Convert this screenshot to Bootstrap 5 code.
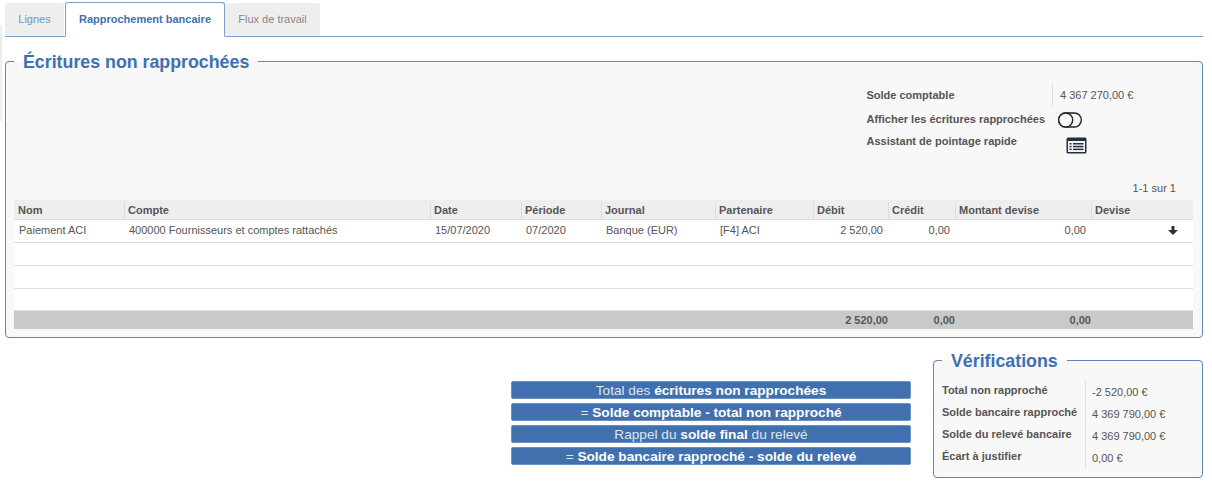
<!DOCTYPE html>
<html lang="fr">
<head>
<meta charset="utf-8">
<title>Rapprochement bancaire</title>
<link rel="stylesheet" href="https://cdn.jsdelivr.net/npm/bootstrap@5.3.0/dist/css/bootstrap.min.css">
<style>
html,body{height:485px;overflow:hidden}
body{font-family:"Liberation Sans",Arial,sans-serif;font-size:11px;color:#555;background:#fff;line-height:1.2;position:relative}
body::before{content:"";position:absolute;left:0;top:25px;width:2px;height:96px;background:#eee}
.shell{padding:2px 9px 0 5px}
.tabs-line{border-bottom:1px solid #7f9fc9;height:35px}
.tabs-line .nav-link{font-size:11px;height:33px;line-height:33px;padding:0;margin-top:1px;border:0;border-radius:3px 3px 0 0;background:#efeeee;color:#7394c0}
.tabs-line .nav-link.tab-a{width:59px;margin-right:1px;text-align:center}
.tabs-line .nav-link.tab-c{width:95px;text-align:center;color:#8a8583}
.tabs-line .nav-link.active{width:160px;height:35px;line-height:33px;margin:0;text-align:center;font-weight:700;color:#4170ae;background:#fff;border:1px solid #7f9fc9;border-bottom-color:#fff;position:relative;z-index:1}
.set-box{border:1px solid #5f87bb;border-radius:4px;background:#f8f8f8;margin:0;min-width:0}
.set-box legend{float:none;width:auto;margin:0;color:#4170ae;font-weight:700}
.main-set{margin-top:14px;padding:0 8px 6px;height:287px}
.main-set legend{font-size:17.8px;padding:0 9px;height:20px;line-height:22px}
.info-zone{margin-left:852.5px;height:111px;padding-top:12px}
.info-row{display:flex;font-weight:700;align-items:flex-start}
.lab-a{width:185.5px;padding-top:6px;font-size:11px}
.val-a{border-left:1px solid #e2e2e2;height:24px;padding:6px 0 0 7px;font-weight:400;font-size:11px}
.r2{height:25px;padding-top:3px}
.r2 .lab-a,.r3 .lab-a{padding-top:3px}
.toggle-i{margin:2px 0 0 6px}
.sheet-i{margin:5px 0 0 14px}
.pager{text-align:right;padding-right:18px;height:13px;font-size:11px}
.grid-t{width:1179px;table-layout:fixed;border-collapse:collapse;margin:5px 0 0;background:#fff;font-size:11px}
.grid-t th{background:#eee;font-weight:700;height:19px;padding:2px 0 0 4px;border-bottom:1px solid #dcdcdc;position:relative}
.grid-t th+th::before{content:"";position:absolute;left:0;top:2px;bottom:0;width:1px;background:#ddd}
.grid-t td{height:23px;padding:0 0 0 5px;border-bottom:1px solid #dedede;white-space:nowrap}
.grid-t tbody tr:last-child td{height:22px}
.grid-t tfoot td{background:#c8c9ca;height:19px;font-weight:700;border-bottom:0;padding:1px 0 0}
.num-c{text-align:right}
.grid-t td.num-c{padding:0 5px 0 0}
.grid-t tfoot td.num-c{padding:1px 0 0}
.c1{width:110px}.c2{width:306px}.c3{width:91px}.c4{width:80px}.c5{width:114px}.c6{width:98px}.c7{width:75px}.c8{width:67px}.c9{width:136px}.c10{width:102px}
.arrow-i{display:block;margin-left:72px;width:10px;height:9px}
.lower{margin-top:22px;height:130px}
.pills{width:400px;margin-left:506px;margin-top:21px;gap:4px}
.pill{height:18px;line-height:17px;background:#4170ae;color:#fff;border-radius:2px;text-align:center;padding:0;border:1px solid #6c91c1;font-size:13.65px}
.pill span{color:#dfe6f0}
.check-set{width:270px;margin-left:22px;margin-top:-9px;height:127px;padding:0 0 0 8px}
.check-set legend{font-size:17.8px;padding:0 9px;height:18px;line-height:20px}
.check-row{display:flex;font-weight:700;height:22px}
.check-row div:first-child{width:143px;padding-top:3px}
.check-row div:last-child{border-left:1px solid #e2e2e2;padding:5px 0 0 6px;font-weight:400}
.check-body{padding-top:12px}
</style>
</head>
<body>
<div class="shell">
  <ul class="nav tabs-line">
    <li class="nav-item"><a class="nav-link tab-a" href="#">Lignes</a></li>
    <li class="nav-item"><a class="nav-link active" href="#">Rapprochement bancaire</a></li>
    <li class="nav-item"><a class="nav-link tab-c" href="#">Flux de travail</a></li>
  </ul>

  <fieldset class="set-box main-set">
    <legend>Écritures non rapprochées</legend>
    <div class="info-zone">
      <div class="info-row"><div class="lab-a">Solde comptable</div><div class="val-a">4 367 270,00 €</div></div>
      <div class="info-row r2"><div class="lab-a">Afficher les écritures rapprochées</div>
        <svg class="toggle-i" width="24" height="16" viewBox="0 0 24 16" fill="none" stroke="#222" stroke-width="1.4"><rect x=".7" y="1" width="22.600" height="14" rx="7"/><circle cx="7.700" cy="8" r="7" fill="#f8f8f8"/></svg></div>
      <div class="info-row r3"><div class="lab-a">Assistant de pointage rapide</div>
        <svg class="sheet-i" width="21" height="17" viewBox="0 0 21 17"><rect x=".5" y=".5" width="20" height="16" rx="1.5" fill="#23303f"/><rect x="2" y="4" width="17" height="11" fill="#f2f4f6"/><g fill="#23303f"><rect x="3.500" y="6" width="2" height="1.500"/><rect x="3.500" y="8.800" width="2" height="1.500"/><rect x="3.500" y="11.600" width="2" height="1.500"/><rect x="7" y="6" width="10.500" height="1.500"/><rect x="7" y="8.800" width="10.500" height="1.500"/><rect x="7" y="11.600" width="10.500" height="1.500"/></g></svg></div>
    </div>
    <div class="pager">1-1 sur 1</div>
    <table class="grid-t">
      <colgroup><col class="c1"><col class="c2"><col class="c3"><col class="c4"><col class="c5"><col class="c6"><col class="c7"><col class="c8"><col class="c9"><col class="c10"></colgroup>
      <thead><tr><th>Nom</th><th>Compte</th><th>Date</th><th>Période</th><th>Journal</th><th>Partenaire</th><th>Débit</th><th>Crédit</th><th>Montant devise</th><th>Devise</th></tr></thead>
      <tbody>
        <tr><td>Paiement ACI</td><td>400000 Fournisseurs et comptes rattachés</td><td>15/07/2020</td><td>07/2020</td><td>Banque (EUR)</td><td>[F4] ACI</td><td class="num-c">2 520,00</td><td class="num-c">0,00</td><td class="num-c">0,00</td><td><svg class="arrow-i" viewBox="0 0 10 9"><path d="M3.500 0h3v4H10L5 9 0 4h3.500z" fill="#333"/></svg></td></tr>
        <tr><td colspan="10"></td></tr>
        <tr><td colspan="10"></td></tr>
        <tr><td colspan="10"></td></tr>
      </tbody>
      <tfoot><tr><td></td><td></td><td></td><td></td><td></td><td></td><td class="num-c">2 520,00</td><td class="num-c">0,00</td><td class="num-c">0,00</td><td></td></tr></tfoot>
    </table>
  </fieldset>

  <div class="lower d-flex">
    <div class="pills d-flex flex-column">
      <div class="pill"><span>Total des </span><b>écritures non rapprochées</b></div>
      <div class="pill"><span>= </span><b>Solde comptable - total non rapproché</b></div>
      <div class="pill"><span>Rappel du </span><b>solde final</b><span> du relevé</span></div>
      <div class="pill"><span>= </span><b>Solde bancaire rapproché - solde du relevé</b></div>
    </div>
    <fieldset class="set-box check-set">
      <legend>Vérifications</legend>
      <div class="check-body">
        <div class="check-row"><div>Total non rapproché</div><div>-2 520,00 €</div></div>
        <div class="check-row"><div>Solde bancaire rapproché</div><div>4 369 790,00 €</div></div>
        <div class="check-row"><div>Solde du relevé bancaire</div><div>4 369 790,00 €</div></div>
        <div class="check-row"><div>Écart à justifier</div><div>0,00 €</div></div>
      </div>
    </fieldset>
  </div>
</div>
<script src="https://cdn.jsdelivr.net/npm/bootstrap@5.3.0/dist/js/bootstrap.bundle.min.js"></script>
</body>
</html>
